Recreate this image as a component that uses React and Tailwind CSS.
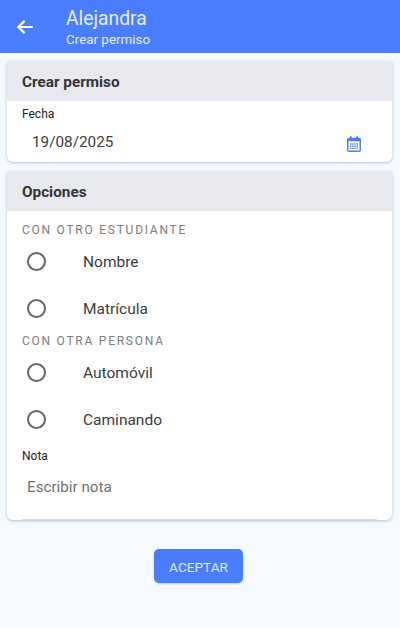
function BackArrow() {
  return (
    <svg className="h-[14px] w-4" viewBox="0 0 16 14" fill="none" stroke="#fff" strokeWidth="2.2">
      <path d="M15.8 7H1.4M7.6 0.9L1.4 7l6.2 6.1" />
    </svg>
  );
}

function CalendarIcon() {
  return (
    <svg className="mt-[3px] h-4 w-[14px]" viewBox="0 0 14 16" fill="none">
      <rect x="0.75" y="2.5" width="12.5" height="12.7" rx="1.3" stroke="#5380ee" strokeWidth="1.5" />
      <path d="M0.7 2.2h12.6v3H0.7z" fill="#5380ee" />
      <path d="M3.9 0.3v2.5M10.1 0.3v2.5" stroke="#5380ee" strokeWidth="1.8" />
      <path d="M3 8h8M3 10.3h8M3 12.4h8" stroke="#5380ee" strokeWidth="1.4" strokeDasharray="1.4 0.8" />
    </svg>
  );
}

function Card({ title, className, children }) {
  return (
    <section className={`overflow-hidden rounded-b-md rounded-t-[2px] bg-white shadow-[0_1px_3px_rgba(40,50,70,0.3)] ${className}`}>
      <h2 className="flex h-10 items-center bg-[#e8e9ee] pl-[15px] pt-[2px] text-[15.3px] font-bold leading-5 text-[#33343a]">
        {title}
      </h2>
      {children}
    </section>
  );
}

function GroupLabel({ children }) {
  return <h3 className="h-4 text-[12px] leading-4 tracking-[1.75px] text-[#7c7c7c]">{children}</h3>;
}

function Option({ label }) {
  return (
    <label className="flex h-[47.5px] items-center pl-[5px]">
      <input type="radio" name="opcion" className="m-0 mb-px size-[19px] appearance-none rounded-full border-2 border-[#666]" />
      <span className="ml-[37px] text-[15.5px] leading-5 text-[#3c3d41]">{label}</span>
    </label>
  );
}

export default function App() {
  return (
    <div className="flex h-[628px] w-[400px] flex-col bg-[#f4faff] font-['Roboto',sans-serif]">
      <header className="flex h-[53px] shrink-0 items-center bg-[#4a7dff] pl-[17px] text-[#e6eeff]">
        <BackArrow />
        <div className="ml-[33px] pt-[2px]">
          <h1 className="text-[19.3px] leading-[23px]">Alejandra</h1>
          <p className="text-[13.4px] leading-[19px]">Crear permiso</p>
        </div>
      </header>
      <main className="flex flex-col pl-[7px] pr-2 pt-2">
        <Card title="Crear permiso" className="h-[101px]">
          <div className="px-[15px] pt-[6px]">
            <div className="text-[12px] leading-[15px] text-[#222]">Fecha</div>
            <div className="flex h-10 items-center justify-between pl-[10px] pr-[16px]">
              <span className="text-[15.3px] leading-5 text-[#3c3d41]">19/08/2025</span>
              <CalendarIcon />
            </div>
          </div>
        </Card>
        <Card title="Opciones" className="mt-[9px] h-[349px]">
          <div className="flex h-[309px] flex-col px-[15px] pt-[11px]">
            <GroupLabel>CON OTRO ESTUDIANTE</GroupLabel>
            <Option label="Nombre" />
            <Option label="Matrícula" />
            <GroupLabel>CON OTRA PERSONA</GroupLabel>
            <Option label="Automóvil" />
            <Option label="Caminando" />
            <div className="mt-[5px] text-[12px] leading-[15px] text-[#222]">Nota</div>
            <input
              placeholder="Escribir nota"
              className="mt-auto h-[55px] w-full border-b border-[#d9dbdf] pb-[10px] pl-[5px] text-[15.2px] placeholder:text-[#707070]"
            />
          </div>
        </Card>
        <button className="ml-[147px] mt-[29px] h-[34px] w-[89px] rounded-[5px] bg-[#4a7dff] pt-[2px] text-[13.6px] leading-5 text-[#e0eaff] shadow-[0_1px_2px_rgba(60,90,160,0.3)]">
          ACEPTAR
        </button>
      </main>
    </div>
  );
}
